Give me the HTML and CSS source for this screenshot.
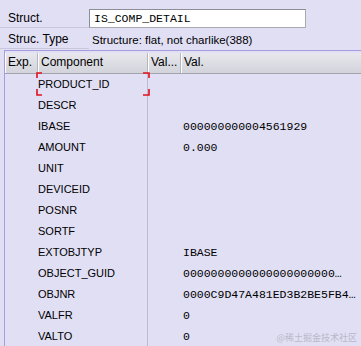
FILE: index.html
```html
<!DOCTYPE html>
<html lang="en">
<head>
  <meta charset="UTF-8" />
  <title>Structure detail</title>
  <link rel="stylesheet" href="styles.css">
</head>
<body>
  <div class="fields">
    <div class="field">
      <span class="label">Struct.</span>
      <span class="input">IS_COMP_DETAIL</span>
    </div>
    <div class="field">
      <span class="label">Struc. Type</span>
      <span class="value">Structure: flat, not charlike(388)</span>
    </div>
  </div>

  <div class="grid">
    <div class="row head">
      <div class="cell">Exp.</div>
      <div class="cell">Component</div>
      <div class="cell">Val...</div>
      <div class="cell">Val.</div>
    </div>

    <div class="row">
      <div class="cell"></div>
      <div class="cell comp focus">PRODUCT_ID
        <svg class="brackets" width="114" height="24" viewBox="0 0 114 24">
          <path d="M1 6V1H6M107 1H113V6M1 17V23H6M107 23H113V17" fill="none" stroke="#e3101c" stroke-width="1.6"/>
        </svg>
      </div>
      <div class="cell"></div>
      <div class="cell val"></div>
    </div>
    <div class="row"><div class="cell"></div><div class="cell comp">DESCR</div><div class="cell"></div><div class="cell val"></div></div>
    <div class="row"><div class="cell"></div><div class="cell comp">IBASE</div><div class="cell"></div><div class="cell val">000000000004561929</div></div>
    <div class="row"><div class="cell"></div><div class="cell comp">AMOUNT</div><div class="cell"></div><div class="cell val">0.000</div></div>
    <div class="row"><div class="cell"></div><div class="cell comp">UNIT</div><div class="cell"></div><div class="cell val"></div></div>
    <div class="row"><div class="cell"></div><div class="cell comp">DEVICEID</div><div class="cell"></div><div class="cell val"></div></div>
    <div class="row"><div class="cell"></div><div class="cell comp">POSNR</div><div class="cell"></div><div class="cell val"></div></div>
    <div class="row"><div class="cell"></div><div class="cell comp">SORTF</div><div class="cell"></div><div class="cell val"></div></div>
    <div class="row"><div class="cell"></div><div class="cell comp">EXTOBJTYP</div><div class="cell"></div><div class="cell val">IBASE</div></div>
    <div class="row"><div class="cell"></div><div class="cell comp">OBJECT_GUID</div><div class="cell"></div><div class="cell val">0000000000000000000000…</div></div>
    <div class="row"><div class="cell"></div><div class="cell comp">OBJNR</div><div class="cell"></div><div class="cell val">0000C9D47A481ED3B2BE5FB4…</div></div>
    <div class="row"><div class="cell"></div><div class="cell comp">VALFR</div><div class="cell"></div><div class="cell val">0</div></div>
    <div class="row"><div class="cell"></div><div class="cell comp">VALTO</div><div class="cell"></div><div class="cell val">0</div></div>
  </div>

  <div class="watermark">@稀土掘金技术社区</div>
</body>
</html>
```

FILE: styles.css
```css
* {
  margin: 0;
  padding: 0;
  box-sizing: border-box;
}
body {
  font-family: "Liberation Sans", Arial, sans-serif;
  font-size: 12px;
  color: #000;
  background-color: #e1dff4;
  width: 361px;
  height: 346px;
  overflow: hidden;
  position: relative;
}

/* fields at the top */
.fields {
  padding-top: 8px;
}
.field {
  display: flex;
  align-items: center;
  height: 21px;
}
.label {
  width: 89px;
  padding-left: 8px;
  height: 19px;
  line-height: 18px;
  border-bottom: 1px solid #c9c7dc;
}
.input {
  width: 217px;
  height: 19px;
  line-height: 17px;
  padding-left: 4px;
  background: #ffffff;
  border: 1px solid #a9a9b0;
  border-top-color: #8d8d96;
  border-left-color: #8d8d96;
  font-family: "Liberation Mono", "Courier New", monospace;
  font-size: 11.5px;
}
.value {
  padding-left: 3px;
  line-height: 18px;
  font-size: 11.5px;
}

/* table */
.grid {
  margin-left: 4px;
  border-top: 1px solid #a59ddf;
  border-left: 1px solid #a59ddf;
  padding-top: 2px;
}
.row {
  display: grid;
  grid-template-columns: 33px 110px 33px 1fr;
  height: 21px;
}
.cell {
  line-height: 21px;
  white-space: nowrap;
  overflow: hidden;
}
.head {
  height: 21px;
  background: linear-gradient(#e7e7ed, #d3d3db);
  border-bottom: 1px solid #a4a4ae;
}
.head .cell {
  line-height: 19px;
  padding-left: 2px;
  border-left: 1px solid #ffffff;
  border-right: 1px solid #b4b4be;
}
.head .cell:last-child {
  border-right: none;
}
.comp {
  border-right: 1px solid #bdbbd0;
  font-size: 11px;
}
.val {
  padding-left: 2px;
  font-family: "Liberation Mono", "Courier New", monospace;
  font-size: 11.5px;
}

/* focus brackets over the current cell */
.focus {
  position: relative;
  overflow: visible;
}
.brackets {
  position: absolute;
  left: -2px;
  top: -2px;
  display: block;
}

.watermark {
  position: absolute;
  right: 4px;
  bottom: 2px;
  font-family: "Noto Sans CJK SC", sans-serif;
  font-size: 9px;
  color: #b9b7c9;
}
```
